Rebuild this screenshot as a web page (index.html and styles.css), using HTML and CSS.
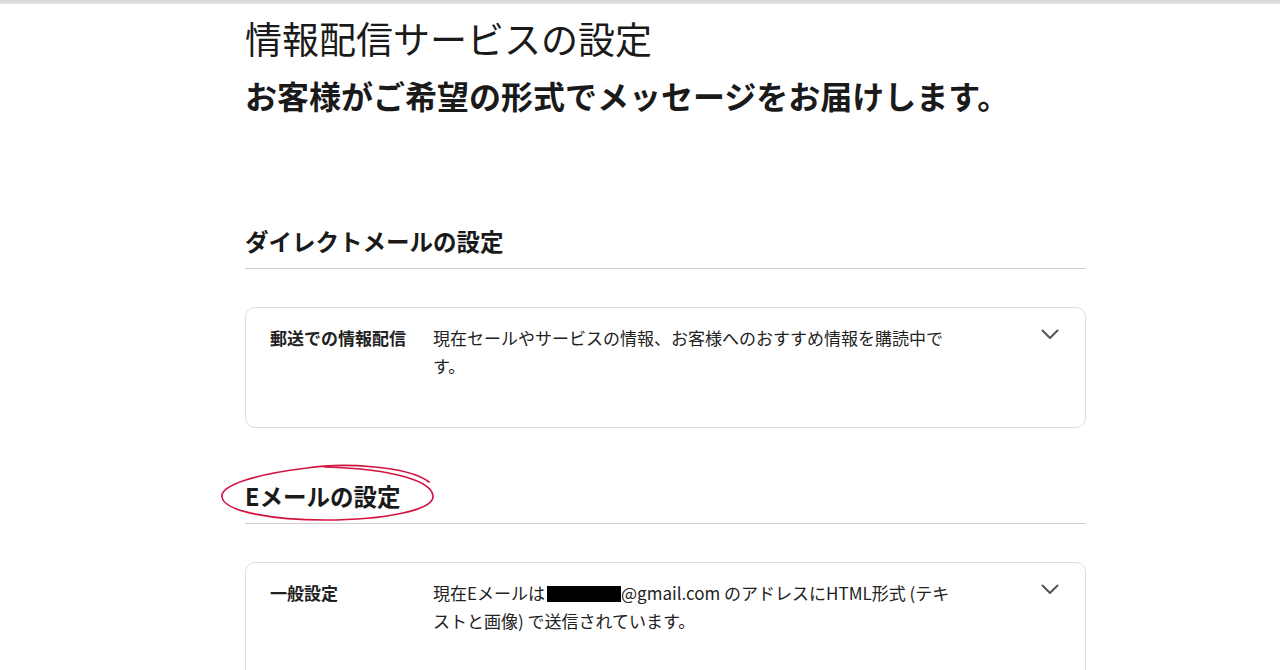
FILE: index.html
```html
<!DOCTYPE html>
<html lang="ja">
<head>
<meta charset="utf-8">
<title>情報配信サービスの設定</title>
<link rel="stylesheet" href="styles.css">
</head>
<body>
<div class="topbar"></div>
<main class="page">
  <h1 class="title">情報配信サービスの設定</h1>
  <p class="subtitle">お客様がご希望の形式でメッセージをお届けします。</p>

  <section class="section first">
    <h2 class="section-head">ダイレクトメールの設定</h2>
    <div class="card">
      <div class="label">郵送での情報配信</div>
      <div class="desc">現在セールやサービスの情報、お客様へのおすすめ情報を購読中です。</div>
      <svg class="chevron" width="18" height="11" viewBox="0 0 18 11"><path d="M1.5 1.5 L9 9 L16.5 1.5" fill="none" stroke="#555" stroke-width="2" stroke-linecap="round" stroke-linejoin="round"/></svg>
    </div>
  </section>

  <section class="section">
    <h2 class="section-head marked">Eメールの設定
      <svg class="circle" width="225" height="65" viewBox="0 0 225 65"><path d="M214 22 C192 5 125 3 92 8 C42 14 5 25 7 37 C9 52 60 60 110 60 C170 60 219 50 218 36 C217 22 182 9 110 7" fill="none" stroke="#d3143f" stroke-width="1.7" stroke-linecap="round"/></svg>
    </h2>
    <div class="card">
      <div class="label">一般設定</div>
      <div class="desc">現在Eメールは<span class="redact"></span>@gmail.com のアドレスにHTML形式 (テキストと画像) で送信されています。</div>
      <svg class="chevron" width="18" height="11" viewBox="0 0 18 11"><path d="M1.5 1.5 L9 9 L16.5 1.5" fill="none" stroke="#555" stroke-width="2" stroke-linecap="round" stroke-linejoin="round"/></svg>
    </div>
  </section>
</main>
</body>
</html>
```

FILE: styles.css
```css
html, body {
  margin: 0;
  padding: 0;
  background: #fff;
}
body {
  font-family: "Noto Sans CJK JP", "Noto Sans", sans-serif;
  color: #1a1a1a;
  overflow: hidden;
}
.topbar {
  height: 4px;
  background: linear-gradient(#d4d4d4, #e6e6e6);
}
.page {
  padding-left: 245px;
  width: 841px;
}
.title {
  margin: 12px 0 0;
  font-size: 37px;
  line-height: 44px;
  font-weight: 400;
}
.subtitle {
  margin: 16px 0 0;
  font-size: 32px;
  line-height: 38px;
  font-weight: 700;
}
.section.first {
  margin-top: 113px;
}
.section {
  margin-top: 54px;
}
.section-head {
  position: relative;
  margin: 0;
  padding-bottom: 13px;
  font-size: 23.5px;
  line-height: 28px;
  font-weight: 700;
  border-bottom: 1px solid #cfcfcf;
}
.circle {
  position: absolute;
  left: -30px;
  top: -22px;
  pointer-events: none;
}
.card {
  margin-top: 38px;
  border: 1px solid #dcdcdc;
  border-radius: 10px;
  padding: 16px 26px 47px 24px;
  display: flex;
  align-items: flex-start;
  font-size: 17px;
  line-height: 28px;
  color: #222;
}
.label {
  width: 163px;
  flex: none;
  font-weight: 700;
}
.desc {
  width: 529px;
  flex: none;
}
.chevron {
  margin-left: auto;
  margin-top: 5px;
  flex: none;
}
.redact {
  display: inline-block;
  width: 74px;
  height: 16px;
  margin-left: 2px;
  background: #000;
  vertical-align: -2px;
}
```
